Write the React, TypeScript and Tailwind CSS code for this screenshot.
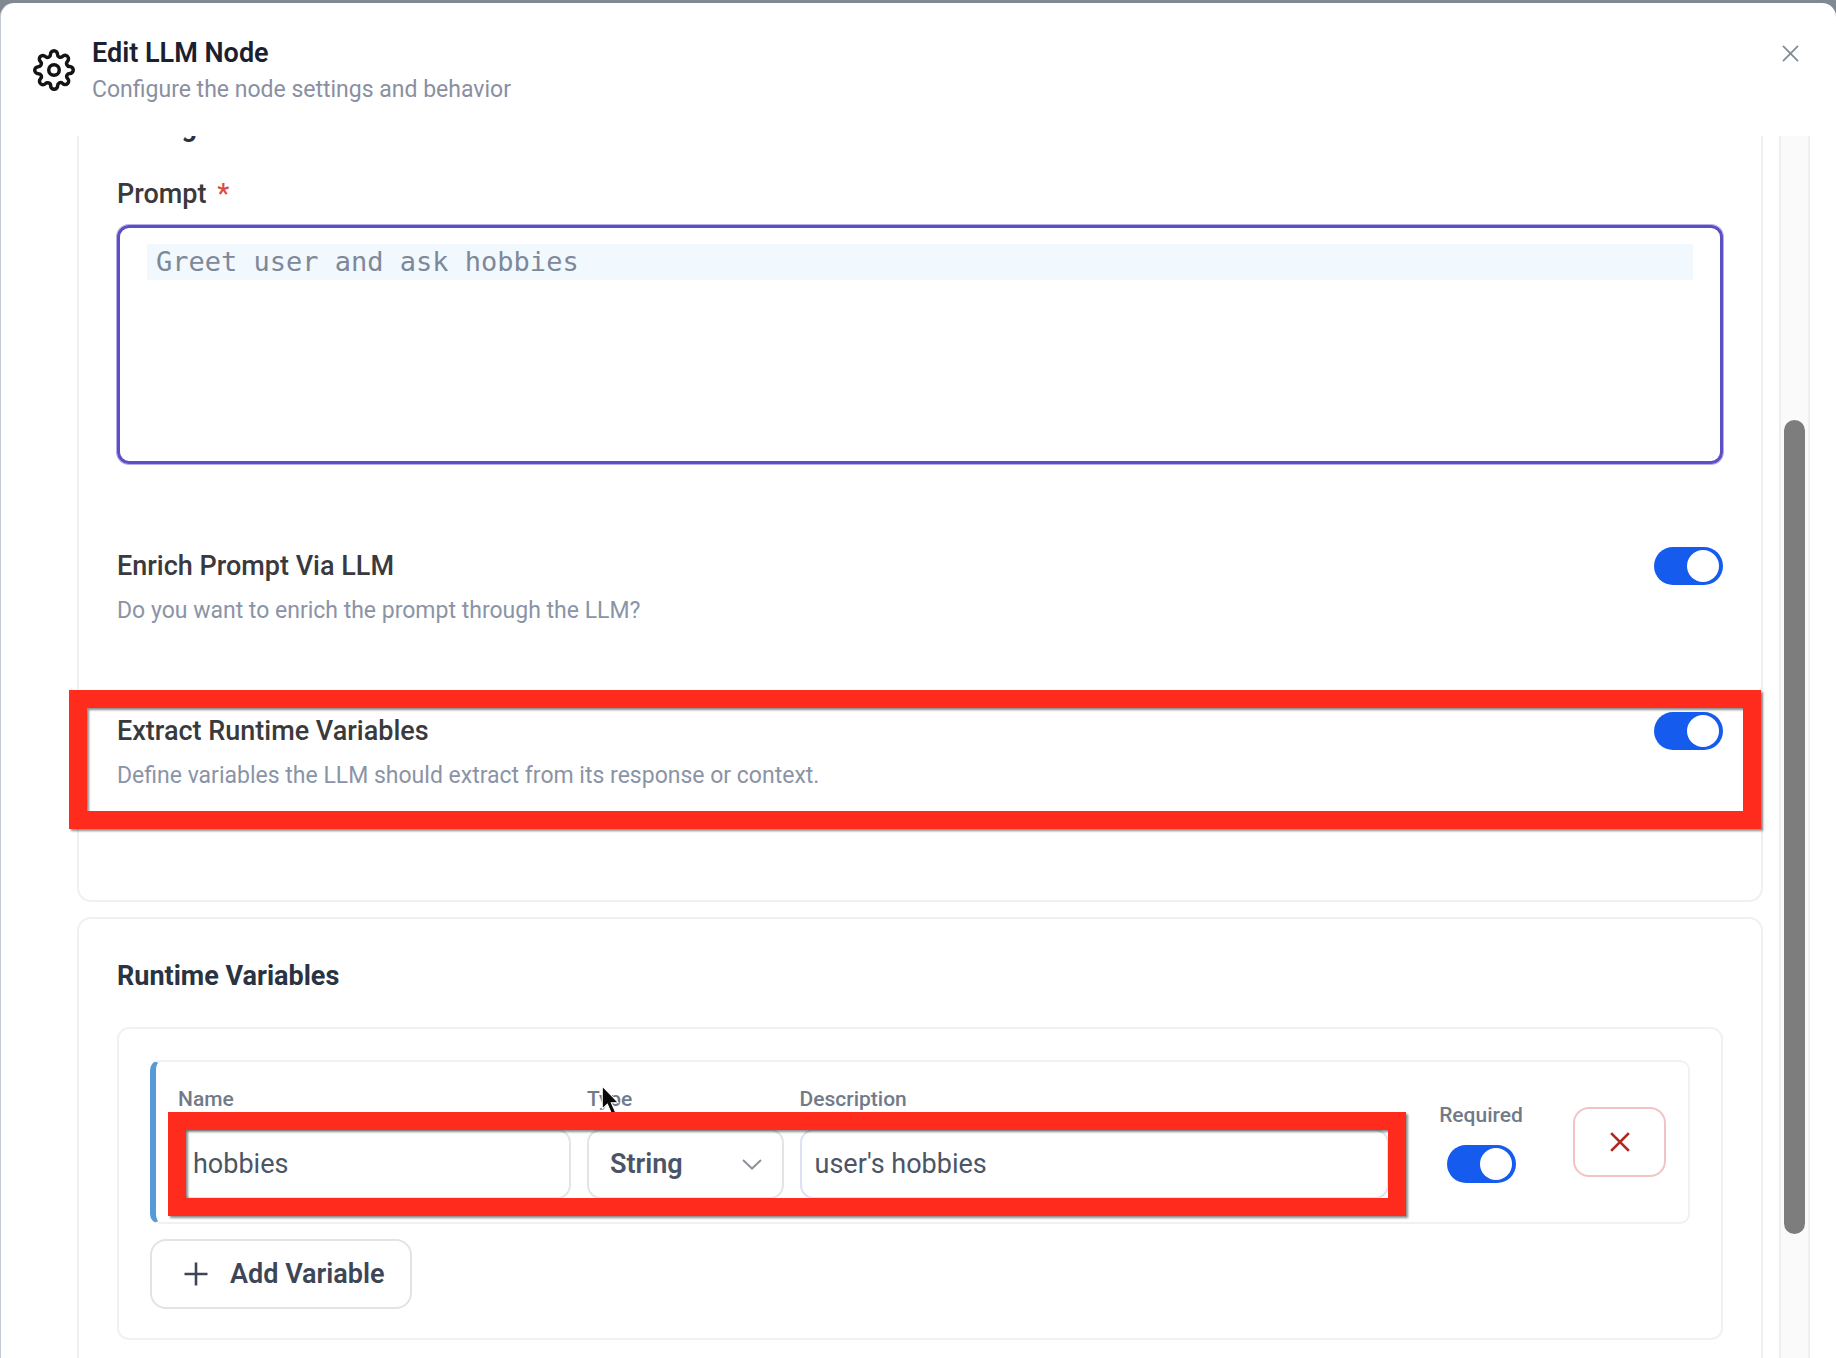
import { useState } from "react";
import type { ReactNode } from "react";
import { FiSettings } from "react-icons/fi";

function Cross({ className }: { className: string }) {
  return (
    <svg viewBox="0 0 18 18" fill="none" stroke="currentColor" className={className} aria-hidden="true">
      <path d="M1 1 17 17M17 1 1 17" />
    </svg>
  );
}

function Switch({ id, label }: { id: string; label?: string }) {
  const [on, setOn] = useState(true);
  return (
    <input
      id={id}
      type="checkbox"
      role="switch"
      aria-label={label}
      checked={on}
      onChange={() => setOn(!on)}
      className="flex h-[38px] w-[69px] shrink-0 cursor-pointer appearance-none items-center rounded-full bg-gray-300 px-1 before:size-8 before:rounded-full before:bg-white checked:justify-end checked:bg-[#155cee]"
    />
  );
}

function Highlight({ className }: { className: string }) {
  return (
    <div
      aria-hidden="true"
      className={`pointer-events-none absolute border-[18px] border-[#ff2b1c] drop-shadow-[2px_2px_1px_rgba(0,0,0,0.45)] ${className}`}
    />
  );
}

function Card({ title, children, className = "" }: { title: string; children: ReactNode; className?: string }) {
  return (
    <section className={`rounded-[14px] border-2 border-[#f0f0f2] bg-white px-[38px] pt-[41px] ${className}`}>
      <h2 className="mb-[35px] text-[27px] leading-8 font-bold text-[#2a3342]">{title}</h2>
      {children}
    </section>
  );
}

function ToggleRow({ id, title, text, children }: { id: string; title: string; text: string; children?: ReactNode }) {
  return (
    <div className="relative flex items-start justify-between">
      <div>
        <label htmlFor={id} className="block text-[27px] leading-[38px] font-medium text-[#3a3a3c]">
          {title}
        </label>
        <p className="mt-3 text-[23px] leading-7 text-[#8a94a6]">{text}</p>
      </div>
      <Switch id={id} />
      {children}
    </div>
  );
}

const fieldLabel = "block text-[21px] leading-7 font-medium text-[#727a8a]";
const fieldBox = "h-[70px] w-full rounded-[14px] border-2 bg-white text-[27px] text-[#4b5565] outline-none";

function VariableRow() {
  return (
    <div className="flex items-center rounded-[10px] border-2 border-l-[6px] border-[#eff1f5] border-l-[#579bd6] bg-white px-[22px] py-[23px]">
      <div className="relative grid flex-1 grid-cols-[2fr_1fr_3fr] gap-4">
        <div className="min-w-0">
          <label htmlFor="var-name" className={`${fieldLabel} mb-4`}>
            Name
          </label>
          <input id="var-name" defaultValue="hobbies" className={`${fieldBox} border-[#e3e4e8] px-[13px]`} />
        </div>
        <div className="relative min-w-0">
          <label htmlFor="var-type" className={`${fieldLabel} mb-4`}>
            Type
          </label>
          <div className="relative">
            <select
              id="var-type"
              defaultValue="String"
              className={`${fieldBox} appearance-none border-[#e3e4e8] px-[21px] font-semibold`}
            >
              <option>String</option>
              <option>Number</option>
              <option>Boolean</option>
            </select>
            <svg
              viewBox="0 0 20 11"
              fill="none"
              stroke="currentColor"
              strokeWidth="2"
              aria-hidden="true"
              className="pointer-events-none absolute top-[30px] right-[22px] w-5 text-[#8d929b]"
            >
              <path d="M1 1l9 8.5L19 1" />
            </svg>
          </div>
          <svg
            viewBox="0 0 16 28"
            aria-hidden="true"
            className="pointer-events-none absolute top-0 left-[14px] h-[31px] w-[18px]"
          >
            <path
              d="M1 1v20.500l4.600-4.200 3.900 9 3.600-1.600-3.900-8.700h6.300z"
              fill="#0a0a0a"
              stroke="#ffffff"
              strokeWidth="1"
            />
          </svg>
        </div>
        <div className="min-w-0">
          <label htmlFor="var-description" className={`${fieldLabel} mb-4`}>
            Description
          </label>
          <input
            id="var-description"
            defaultValue="user's hobbies"
            className={`${fieldBox} border-[#dce1f4] px-[13px]`}
          />
        </div>
        <Highlight className="top-[27px] -right-[17px] -bottom-[17px] -left-[10px]" />
      </div>
      <div className="flex w-[184px] flex-col items-center gap-4">
        <label htmlFor="var-required" className={fieldLabel}>
          Required
        </label>
        <Switch id="var-required" />
      </div>
      <button
        type="button"
        aria-label="Remove variable"
        className="flex h-[70px] w-[93px] items-center justify-center rounded-[16px] border-2 border-[#f0c4c4] bg-white text-[#b02a22]"
      >
        <Cross className="size-5 stroke-[2.5]" />
      </button>
    </div>
  );
}

export default function App() {
  return (
    <div className="h-screen overflow-hidden bg-[#808892] pt-[3px] font-[Roboto,sans-serif]">
      <div
        role="dialog"
        aria-labelledby="dialog-title"
        className="flex h-full flex-col overflow-hidden rounded-t-[14px] border-l border-[#c3c8d6] bg-white"
      >
        <header className="flex h-[133px] shrink-0 items-start pt-[34px] pr-[37px] pl-8">
          <FiSettings size={42} className="mt-3 text-[#141414]" />
          <div className="ml-[17px] flex-1">
            <h1 id="dialog-title" className="text-[27px] leading-8 font-semibold text-[#1b2030]">
              Edit LLM Node
            </h1>
            <p className="mt-[7px] text-[23px] leading-7 text-[#8a8fa1]">Configure the node settings and behavior</p>
          </div>
          <button type="button" aria-label="Close" className="mt-2 text-[#878d98]">
            <Cross className="size-[17px] stroke-2" />
          </button>
        </header>

        <div className="flex min-h-0 flex-1 gap-4 overflow-hidden pr-[26px] pl-[76px]">
          <main className="-mt-[68px] flex flex-1 flex-col gap-[15px]">
            <Card title="Configuration" className="shrink-0 pb-[110px]">
              <label htmlFor="prompt" className="block text-[27px] leading-8 font-medium text-[#3a3a3c]">
                Prompt <span className="ml-1 text-[#dc4a43]">*</span>
              </label>
              <div className="mt-[15px] rounded-[12px] border-[3px] border-[#5b4fc3] px-[27px] pt-4 pb-[26px] shadow-[0_0_0_1px_#b5aeea]">
                <textarea
                  id="prompt"
                  defaultValue="Greet user and ask hobbies"
                  className="block h-[191px] w-full resize-none bg-[linear-gradient(#f1f8fe,#f1f8fe)] bg-[length:100%_36px] bg-no-repeat px-[9px] font-['DejaVu_Sans_Mono',monospace] text-[27px] leading-9 text-[#7f8898] outline-none"
                />
              </div>
              <div className="mt-[83px] flex flex-col gap-[87px]">
                <ToggleRow
                  id="enrich"
                  title="Enrich Prompt Via LLM"
                  text="Do you want to enrich the prompt through the LLM?"
                />
                <ToggleRow
                  id="extract"
                  title="Extract Runtime Variables"
                  text="Define variables the LLM should extract from its response or context."
                >
                  <Highlight className="-top-[22px] -right-[38px] -bottom-[39px] -left-[48px]" />
                </ToggleRow>
              </div>
            </Card>

            <Card title="Runtime Variables" className="shrink-0 pb-10">
              <div className="rounded-[12px] border-2 border-[#eff1f5] px-[31px] pt-[31px] pb-[29px]">
                <VariableRow />
                <button
                  type="button"
                  className="mt-[15px] flex h-[70px] items-center rounded-[16px] border-2 border-[#e2e3e7] bg-white pr-[25px] pl-8 text-[27px] font-semibold text-[#3d4656]"
                >
                  <svg
                    viewBox="0 0 24 24"
                    fill="none"
                    stroke="currentColor"
                    strokeWidth="2.6"
                    aria-hidden="true"
                    className="mr-[22px] size-6"
                  >
                    <path d="M12 .5v23M.5 12h23" />
                  </svg>
                  Add Variable
                </button>
              </div>
            </Card>
          </main>

          <div aria-hidden="true" className="flex w-[31px] flex-col items-center border-x-2 border-[#efefef] bg-[#fafafa]">
            <div className="flex-[284]" />
            <div className="w-[21px] flex-[814] rounded-full bg-[#7d7d7d]" />
            <div className="flex-[124]" />
          </div>
        </div>
      </div>
    </div>
  );
}
